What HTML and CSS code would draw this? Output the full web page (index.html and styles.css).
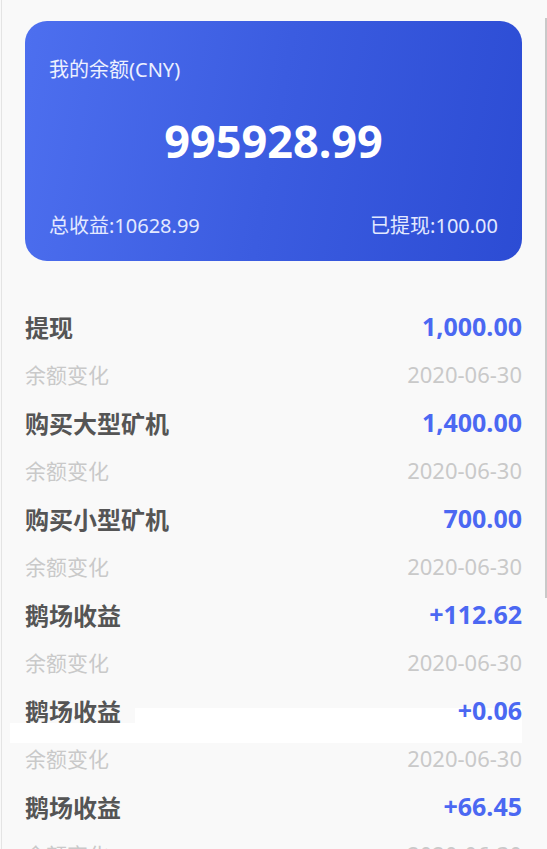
FILE: index.html
```html
<!DOCTYPE html>
<html lang="zh-CN">
<head>
    <meta charset="UTF-8">
    <meta name="viewport" content="width=device-width, initial-scale=1.0">
    <title>我的余额</title>
    <link rel="stylesheet" href="styles.css">
</head>
<body>

<div class="page">
    <div class="balance-card">
        <div class="card-label">我的余额(CNY)</div>
        <div class="card-amount">995928.99</div>
        <div class="card-footer">
            <span>总收益:10628.99</span>
            <span>已提现:100.00</span>
        </div>
    </div>

    <ul class="records">
        <li class="record">
            <div class="record-line">
                <span class="record-title">提现</span>
                <span class="record-amount">1,000.00</span>
            </div>
            <div class="record-line sub">
                <span>余额变化</span>
                <span class="record-date">2020-06-30</span>
            </div>
        </li>
        <li class="record">
            <div class="record-line">
                <span class="record-title">购买大型矿机</span>
                <span class="record-amount">1,400.00</span>
            </div>
            <div class="record-line sub">
                <span>余额变化</span>
                <span class="record-date">2020-06-30</span>
            </div>
        </li>
        <li class="record">
            <div class="record-line">
                <span class="record-title">购买小型矿机</span>
                <span class="record-amount">700.00</span>
            </div>
            <div class="record-line sub">
                <span>余额变化</span>
                <span class="record-date">2020-06-30</span>
            </div>
        </li>
        <li class="record">
            <div class="record-line">
                <span class="record-title">鹅场收益</span>
                <span class="record-amount">+112.62</span>
            </div>
            <div class="record-line sub">
                <span>余额变化</span>
                <span class="record-date">2020-06-30</span>
            </div>
        </li>
        <li class="record">
            <div class="record-line">
                <span class="record-title">鹅场收益</span>
                <span class="record-amount">+0.06</span>
            </div>
            <div class="record-line sub">
                <span>余额变化</span>
                <span class="record-date">2020-06-30</span>
            </div>
            <div class="glitch-top"></div>
            <div class="glitch-bottom"></div>
        </li>
        <li class="record">
            <div class="record-line">
                <span class="record-title">鹅场收益</span>
                <span class="record-amount">+66.45</span>
            </div>
            <div class="record-line sub">
                <span>余额变化</span>
                <span class="record-date">2020-06-30</span>
            </div>
        </li>
    </ul>

    <div class="scroll-thumb"></div>
</div>

</body>
</html>
```

FILE: styles.css
```css
body {
    margin: 0;
    padding: 0;
    background-color: #f9f9f9;
    font-family: "Noto Sans", "Noto Sans CJK SC", sans-serif;
    overflow: hidden;
}

.page {
    position: relative;
    height: 849px;
    padding: 21px 25px 0 23px;
    border-left: 1px solid #e4e4e4;
    margin-left: 1px;
    box-sizing: border-box;
}

.balance-card {
    height: 240px;
    box-sizing: border-box;
    padding: 24px 24px 0 24px;
    border-radius: 22px;
    background: linear-gradient(100deg, #4d6fef 0%, #3b5ce0 50%, #2c4cd4 100%);
    color: #fff;
    display: flex;
    flex-direction: column;
}

.card-label {
    font-size: 20px;
    line-height: 50px;
    color: #edf0ff;
}

.card-amount {
    font-size: 45px;
    font-weight: bold;
    text-align: center;
    line-height: 60px;
    margin-top: 16px;
}

.card-footer {
    display: flex;
    justify-content: space-between;
    font-size: 20px;
    color: #e3e9ff;
    margin-top: 37px;
    line-height: 36px;
}

.records {
    list-style: none;
    margin: 41px 0 0 0;
    padding: 0;
}

.record {
    position: relative;
}

.record-line {
    display: flex;
    justify-content: space-between;
    align-items: center;
    height: 48px;
}

.record-title {
    font-size: 24px;
    font-weight: bold;
    color: #555;
    position: relative;
    z-index: 1;
}

.record-amount {
    font-size: 25px;
    font-weight: bold;
    color: #4b68f2;
    position: relative;
    z-index: 1;
}

.record-line.sub {
    font-size: 21px;
    color: #c9c9c9;
}

.record-date {
    font-size: 22px;
}

/* white rendering artefact over the fifth row */
.glitch-top {
    position: absolute;
    left: 110px;
    right: 0;
    top: 22px;
    height: 15px;
    background: #fff;
}

.glitch-bottom {
    position: absolute;
    left: -15px;
    right: 0;
    top: 37px;
    height: 20px;
    background: #fff;
    z-index: 2;
}

.scroll-thumb {
    position: absolute;
    right: 0;
    top: 18px;
    width: 2px;
    height: 580px;
    background: #c9c9c9;
}
```
